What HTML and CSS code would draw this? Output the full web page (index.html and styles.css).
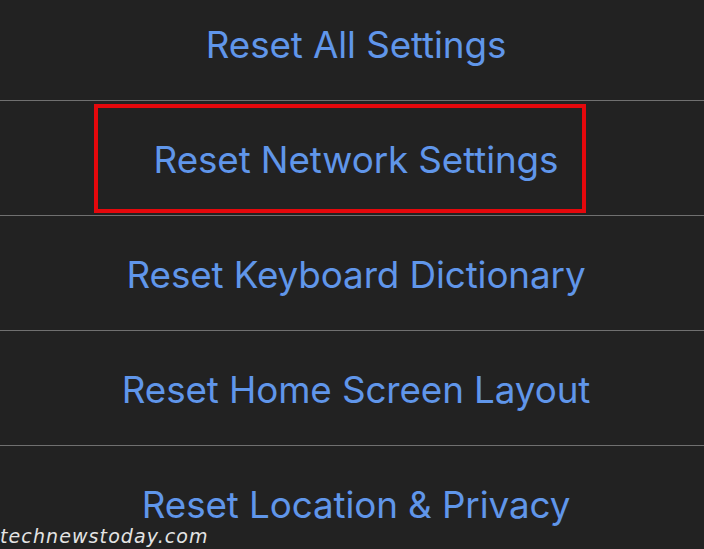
FILE: index.html
```html
<!DOCTYPE html>
<html>
<head>
<meta charset="utf-8">
<link rel="stylesheet" href="styles.css">
</head>
<body>
<div class="page">
  <ul class="list">
    <li class="row">Reset All Settings</li>
    <li class="row highlighted"><span class="mark"></span>Reset Network Settings</li>
    <li class="row">Reset Keyboard Dictionary</li>
    <li class="row">Reset Home Screen Layout</li>
    <li class="row">Reset Location &amp; Privacy</li>
  </ul>
  <div class="watermark">technewstoday.com</div>
</div>
</body>
</html>
```
FILE: styles.css
```css
html, body {
  margin: 0;
  padding: 0;
  background: #222222;
}
.page {
  position: relative;
  width: 704px;
  height: 549px;
  overflow: hidden;
  background: #222222;
}
.list {
  list-style: none;
  margin: -14px 0 0 0;
  padding: 0;
}
.row {
  position: relative;
  display: flex;
  align-items: center;
  justify-content: center;
  box-sizing: border-box;
  height: 115px;
  padding-left: 8px;
  padding-top: 2px;
  border-bottom: 1px solid #707070;
  font-family: Inter, "Noto Sans", sans-serif;
  font-size: 36.8px;
  letter-spacing: -0.1px;
  color: #6096ea;
}
.mark {
  position: absolute;
  left: 94px;
  top: 3px;
  width: 484px;
  height: 101px;
  border: 4px solid #e5080c;
}
.watermark {
  position: absolute;
  left: 0;
  bottom: 2px;
  font-family: "DejaVu Sans", sans-serif;
  font-style: italic;
  font-weight: 200;
  font-size: 19px;
  letter-spacing: 1.1px;
  color: #e4e4e4;
}
```
